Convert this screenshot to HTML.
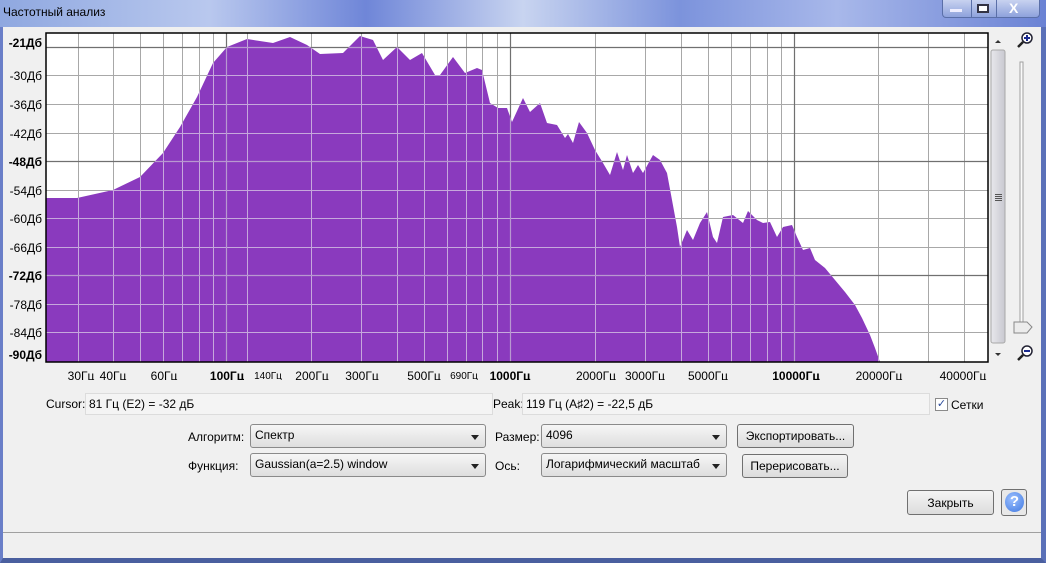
<!DOCTYPE html>
<html><head><meta charset="utf-8"><style>
*{margin:0;padding:0;box-sizing:border-box}
body{width:1046px;height:563px;overflow:hidden;position:relative;background:#f0f0f0;font-family:"Liberation Sans","DejaVu Sans",sans-serif;font-size:12px;color:#000}
.a{position:absolute}
.title{left:0;top:0;width:1046px;height:28px;background:linear-gradient(90deg,#8fa8e0 0%,#b9c8ee 20%,#6f86d8 35%,#c8d4f0 50%,#7c93dc 65%,#a8b8ea 80%,#6a82d4 100%)}
.sel{border:1px solid #8a8a8a;border-radius:3px;background:linear-gradient(#f6f6f6,#dedede);height:24px;padding:3px 0 0 4px;font-size:12px}
.sel:after{content:"";position:absolute;right:6px;top:10px;border:4px solid transparent;border-top:5px solid #222}
.btn{border:1px solid #707070;border-radius:3px;background:linear-gradient(#f4f4f4,#dcdcdc);text-align:center;font-size:12px;padding-top:4px}
.tb{background:#f4f4f4;border:1px solid #dcdcdc;height:22px;padding:3px 0 0 3px}
</style></head><body>
<div class="a title"></div>
<div class="a" style="left:3px;top:5px;font-size:12px;color:#000">Частотный анализ</div>
<div class="a" style="left:942px;top:0;width:98px;height:18px;border:1px solid #5a6fa8;border-top:none;border-radius:0 0 4px 4px;background:linear-gradient(#c8d2f0,#8ea2dc)"></div>
<div class="a" style="left:971px;top:0;width:1px;height:17px;background:#5a6fa8"></div>
<div class="a" style="left:996px;top:0;width:1px;height:17px;background:#5a6fa8"></div>
<div class="a" style="left:950px;top:9px;width:12px;height:3px;background:#eef"></div>
<div class="a" style="left:977px;top:4px;width:12px;height:9px;border:2px solid #334;background:#fff"></div>
<div class="a" style="left:1009px;top:0px;color:#fff;font-weight:bold;font-size:14px">X</div>
<div class="a" style="left:0;top:27px;width:1046px;height:536px;background:#f0f0f0;border-left:3px solid #6a7fc8;border-right:5px solid #5a70b8;border-bottom:5px solid #4a5f9f"></div>
<div class="a" style="left:3px;top:532px;width:1038px;height:1px;background:#a0a0a0"></div>

<svg class="a" style="left:0;top:0" width="1046" height="380" font-family="Liberation Sans, sans-serif">
<defs>
<clipPath id="c"><rect x="46" y="33" width="942" height="329"/></clipPath>
<clipPath id="p"><polygon id="sp" points="46,362 46,198 77,198 113,190 140,177 163,153 180,127 197,97 213,63 227,47 247,39 273,43 290,37 307,45 320,54 343,53 360,36 373,40 383,60 397,47 410,60 422,53 435,75 440,75 453,57 465,73 477,68 482,70 490,103 498,108 507,108 512,122 523,98 530,112 540,103 547,123 557,125 565,138 568,134 573,143 579,122 587,133 595,150 603,163 610,175 617,152 623,170 627,155 633,173 638,165 643,173 653,155 660,160 667,173 672,200 677,227 680,247 687,230 693,240 700,223 707,212 713,237 717,243 723,217 733,215 743,223 748,211 757,220 763,223 770,222 777,237 783,227 792,225 797,237 803,250 810,248 815,260 825,268 835,280 845,292 855,305 862,318 870,335 875,348 880,362"/></clipPath>
<linearGradient id="g1" x1="0" x2="1"><stop offset="0" stop-color="#e8e8ec"/><stop offset="1" stop-color="#c8c8d0"/></linearGradient>
<g id="gl">
<line x1="46" x2="988" y1="75.5" y2="75.5"/><line x1="46" x2="988" y1="104.5" y2="104.5"/><line x1="46" x2="988" y1="133.5" y2="133.5"/><line x1="46" x2="988" y1="190.5" y2="190.5"/><line x1="46" x2="988" y1="218.5" y2="218.5"/><line x1="46" x2="988" y1="247.5" y2="247.5"/><line x1="46" x2="988" y1="304.5" y2="304.5"/><line x1="46" x2="988" y1="332.5" y2="332.5"/>
<line y1="33" y2="362" x1="78.5" x2="78.5"/><line y1="33" y2="362" x1="113.5" x2="113.5"/><line y1="33" y2="362" x1="140.5" x2="140.5"/><line y1="33" y2="362" x1="163.5" x2="163.5"/><line y1="33" y2="362" x1="182.5" x2="182.5"/><line y1="33" y2="362" x1="199.5" x2="199.5"/><line y1="33" y2="362" x1="213.5" x2="213.5"/><line y1="33" y2="362" x1="247.5" x2="247.5"/><line y1="33" y2="362" x1="311.5" x2="311.5"/><line y1="33" y2="362" x1="361.5" x2="361.5"/><line y1="33" y2="362" x1="397.5" x2="397.5"/><line y1="33" y2="362" x1="424.5" x2="424.5"/><line y1="33" y2="362" x1="447.5" x2="447.5"/><line y1="33" y2="362" x1="466.5" x2="466.5"/><line y1="33" y2="362" x1="482.5" x2="482.5"/><line y1="33" y2="362" x1="497.5" x2="497.5"/><line y1="33" y2="362" x1="595.5" x2="595.5"/><line y1="33" y2="362" x1="645.5" x2="645.5"/><line y1="33" y2="362" x1="681.5" x2="681.5"/><line y1="33" y2="362" x1="708.5" x2="708.5"/><line y1="33" y2="362" x1="731.5" x2="731.5"/><line y1="33" y2="362" x1="750.5" x2="750.5"/><line y1="33" y2="362" x1="767.5" x2="767.5"/><line y1="33" y2="362" x1="781.5" x2="781.5"/><line y1="33" y2="362" x1="878.5" x2="878.5"/><line y1="33" y2="362" x1="928.5" x2="928.5"/><line y1="33" y2="362" x1="964.5" x2="964.5"/>
</g>
<g id="gd">
<line x1="46" x2="988" y1="47.5" y2="47.5"/><line x1="46" x2="988" y1="161.5" y2="161.5"/><line x1="46" x2="988" y1="275.5" y2="275.5"/>
<line y1="33" y2="362" x1="226.5" x2="226.5"/><line y1="33" y2="362" x1="510.5" x2="510.5"/><line y1="33" y2="362" x1="794.5" x2="794.5"/>
</g>
</defs>
<rect x="46" y="33" width="942" height="329" fill="#fff"/>
<g stroke="#a8a8a8"><use href="#gl"/></g>
<g stroke="#707070" stroke-width="1.2"><use href="#gd"/></g>
<rect x="40" y="30" width="960" height="340" fill="#8a3abe" clip-path="url(#p)"/>
<g clip-path="url(#p)">
<g stroke="#c6a8dc"><use href="#gl"/></g>
<g stroke="#b898d0" stroke-width="1.2"><use href="#gd"/></g>
</g>
<rect x="46" y="33" width="942" height="329" fill="none" stroke="#000" stroke-width="1.5"/>
<g font-size="12" fill="#000" text-anchor="end">
<text x="42" y="47" font-weight="bold">-21Дб</text><text x="42" y="80">-30Дб</text><text x="42" y="109">-36Дб</text><text x="42" y="138">-42Дб</text><text x="42" y="166" font-weight="bold">-48Дб</text><text x="42" y="195">-54Дб</text><text x="42" y="223">-60Дб</text><text x="42" y="252">-66Дб</text><text x="42" y="280" font-weight="bold">-72Дб</text><text x="42" y="309">-78Дб</text><text x="42" y="337">-84Дб</text><text x="42" y="359" font-weight="bold">-90Дб</text>
</g>
<g font-size="12" fill="#000" text-anchor="middle">
<text x="81" y="380">30Гц</text><text x="113" y="380">40Гц</text><text x="164" y="380">60Гц</text><text x="227" y="380" font-weight="bold">100Гц</text><text x="268" y="379" font-size="10">140Гц</text><text x="312" y="380">200Гц</text><text x="362" y="380">300Гц</text><text x="424" y="380">500Гц</text><text x="464" y="379" font-size="10">690Гц</text><text x="510" y="380" font-weight="bold">1000Гц</text><text x="596" y="380">2000Гц</text><text x="645" y="380">3000Гц</text><text x="708" y="380">5000Гц</text><text x="796" y="380" font-weight="bold">10000Гц</text><text x="879" y="380">20000Гц</text><text x="963" y="380">40000Гц</text>
</g>
<rect x="990" y="34" width="16" height="327" fill="#f0f0f0"/>
<path d="M995 43 L1001 43 L998 40 Z" fill="#333"/>
<path d="M995 353 L1001 353 L998 356 Z" fill="#333"/>
<rect x="991" y="50" width="14" height="293" rx="2" fill="url(#g1)" stroke="#a8a8a8"/>
<g stroke="#555"><line x1="995" x2="1002" y1="194.5" y2="194.5"/><line x1="995" x2="1002" y1="196.5" y2="196.5"/><line x1="995" x2="1002" y1="198.5" y2="198.5"/><line x1="995" x2="1002" y1="200.5" y2="200.5"/></g>
<rect x="1020" y="62" width="3" height="268" fill="#fafafa" stroke="#a0a0a0"/>
<path d="M1014 322 H1027 L1032 327 L1027 333 H1014 Z" fill="#ececec" stroke="#888"/>
<circle cx="1027" cy="38" r="5" fill="#fff" stroke="#223" stroke-width="1.5"/>
<path d="M1024 38 H1030 M1027 35 V41" stroke="#1a2a90" stroke-width="2"/>
<line x1="1023" y1="42" x2="1018" y2="47" stroke="#222" stroke-width="2.5"/>
<circle cx="1027" cy="351" r="5" fill="#fff" stroke="#223" stroke-width="1.5"/>
<path d="M1024 351 H1030" stroke="#1a2a90" stroke-width="2"/>
<line x1="1023" y1="355" x2="1018" y2="360" stroke="#222" stroke-width="2.5"/>
</svg>

<div class="a" style="left:46px;top:397px">Cursor:</div>
<div class="a tb" style="left:85px;top:393px;width:408px">81 Гц (E2) = -32 дБ</div>
<div class="a" style="left:493px;top:397px">Peak:</div>
<div class="a tb" style="left:522px;top:393px;width:408px">119 Гц (A♯2) = -22,5 дБ</div>
<div class="a" style="left:935px;top:398px;width:13px;height:13px;border:1px solid #8a8a8a;background:#fff;font-size:11px;line-height:11px;text-align:center;color:#2a4a9a">✓</div>
<div class="a" style="left:951px;top:398px">Сетки</div>

<div class="a" style="left:188px;top:430px">Алгоритм:</div>
<div class="a sel" style="left:250px;top:424px;width:236px">Спектр</div>
<div class="a" style="left:188px;top:459px">Функция:</div>
<div class="a sel" style="left:250px;top:453px;width:236px">Gaussian(a=2.5) window</div>
<div class="a" style="left:495px;top:430px">Размер:</div>
<div class="a sel" style="left:541px;top:424px;width:186px">4096</div>
<div class="a" style="left:495px;top:459px">Ось:</div>
<div class="a sel" style="left:541px;top:453px;width:186px">Логарифмический масштаб</div>
<div class="a btn" style="left:737px;top:424px;width:117px;height:24px">Экспортировать...</div>
<div class="a btn" style="left:742px;top:454px;width:106px;height:24px">Перерисовать...</div>
<div class="a btn" style="left:907px;top:490px;width:87px;height:25px;padding-top:5px">Закрыть</div>
<div class="a" style="left:1001px;top:489px;width:26px;height:27px;border:1px solid #707070;border-radius:3px;background:#e8e8e8"></div>
<div class="a" style="left:1005px;top:492px;width:19px;height:20px;border-radius:50%;background:radial-gradient(circle at 40% 35%,#9cc0ff,#3f78e0);color:#fff;font-weight:bold;font-size:15px;text-align:center;line-height:20px">?</div>
</body></html>
